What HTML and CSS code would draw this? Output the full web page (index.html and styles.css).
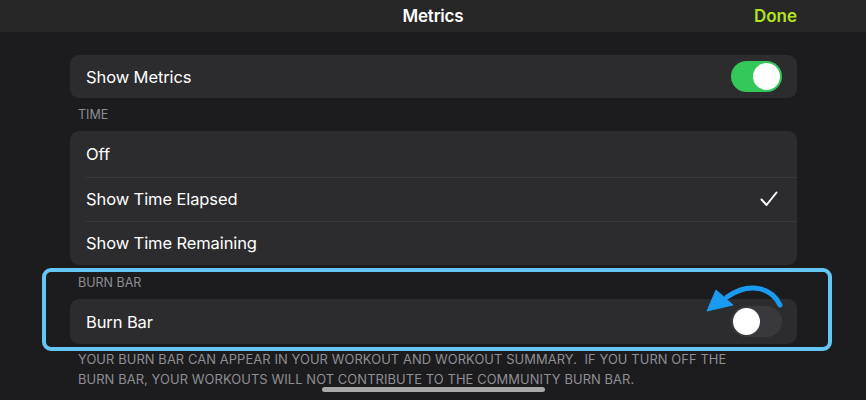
FILE: index.html
```html
<!DOCTYPE html>
<html>
<head>
<meta charset="utf-8">
<link rel="stylesheet" href="styles.css">
</head>
<body>
<header class="nav">
  <div class="nav-title">Metrics</div>
  <div class="nav-done">Done</div>
</header>
<main class="content">
  <div class="card first">
    <div class="row"><span>Show Metrics</span><span class="switch on"><span class="knob"></span></span></div>
  </div>
  <div class="section-label">TIME</div>
  <div class="card">
    <div class="row r1"><span>Off</span></div>
    <div class="row r2 sep"><span>Show Time Elapsed</span>
      <svg class="check" width="18" height="16" viewBox="0 0 18 16"><path d="M1.5 8.5 L6.5 14 L16.5 1.5" fill="none" stroke="#fff" stroke-width="2" stroke-linecap="round" stroke-linejoin="round"/></svg>
    </div>
    <div class="row r3 sep"><span>Show Time Remaining</span></div>
  </div>
  <div class="burn">
    <div class="section-label burn-label">BURN BAR</div>
    <div class="card">
      <div class="row"><span>Burn Bar</span><span class="switch off"><span class="knob"></span></span></div>
    </div>
    <div class="highlight"></div>
    <svg class="arrow" width="90" height="40" viewBox="0 0 90 40">
      <path d="M80 25 C72 8 50 1 27 17" fill="none" stroke="#1b9af1" stroke-width="5" stroke-linecap="round"/>
      <path d="M7 31 L16 10 L33 25 Z" fill="#1b9af1" stroke="#1b9af1" stroke-width="1" stroke-linejoin="round"/>
    </svg>
  </div>
  <p class="footer">YOUR BURN BAR CAN APPEAR IN YOUR WORKOUT AND WORKOUT SUMMARY.&nbsp; IF YOU TURN OFF THE<br>BURN BAR, YOUR WORKOUTS WILL NOT CONTRIBUTE TO THE COMMUNITY BURN BAR.</p>
</main>
<div class="home-indicator"></div>
</body>
</html>
```
FILE: styles.css
```css
* { box-sizing: border-box; }
html, body { margin: 0; padding: 0; }
body {
  width: 866px;
  height: 400px;
  overflow: hidden;
  background: #1c1c1e;
  font-family: Inter, "Noto Sans", sans-serif;
  color: #fff;
  position: relative;
}
.nav {
  height: 32px;
  background: #272727;
  display: flex;
  align-items: center;
  justify-content: center;
  position: relative;
}
.nav-title {
  font-size: 17px;
  font-weight: 600;
  letter-spacing: -0.2px;
}
.nav-done {
  position: absolute;
  right: 69px;
  top: 0;
  height: 32px;
  line-height: 32px;
  font-size: 17px;
  font-weight: 600;
  color: #b3e31d;
}
.content {
  padding: 0 69px 0 70px;
}
.card {
  background: #2c2c2e;
  border-radius: 9px;
}
.card.first { margin-top: 23px; }
.row {
  height: 43px;
  display: flex;
  align-items: center;
  justify-content: space-between;
  padding: 0 16px;
  font-size: 16.5px;
  letter-spacing: -0.1px;
  position: relative;
}
.row.r1 { height: 46px; }
.row.r2 { height: 44px; }
.row.r3 { height: 44px; }
.burn .row { height: 45px; }
.row.sep::before {
  content: "";
  position: absolute;
  left: 16px;
  right: 0;
  top: 0;
  height: 1px;
  background: #38383a;
}
.check { margin-right: 3px; }
.switch {
  width: 51px;
  height: 31px;
  border-radius: 16px;
  display: flex;
  align-items: center;
  padding: 2px;
}
.switch.on { background: #34c759; justify-content: flex-end; margin-right: -1px; }
.switch.off { background: #39393d; justify-content: flex-start; margin-right: -1px; }
.knob {
  width: 27px;
  height: 27px;
  border-radius: 50%;
  background: #fff;
}
.section-label {
  height: 33px;
  display: flex;
  align-items: flex-end;
  padding: 0 0 9px 8px;
  font-size: 12.5px;
  line-height: 14px;
  color: #8e8e93;
}
.burn { position: relative; }
.burn-label { height: 34px; }
.highlight {
  position: absolute;
  top: 3px;
  bottom: -7px;
  left: -28px;
  right: -35px;
  border: 4px solid #63c6f4;
  border-radius: 9px;
}
.arrow {
  position: absolute;
  right: 7px;
  top: 15px;
}
.footer {
  margin: 0;
  padding: 6px 0 0 8px;
  font-size: 12.9px;
  line-height: 20px;
  color: #8e8e93;
  letter-spacing: 0.1px;
}
.home-indicator {
  position: absolute;
  left: 322px;
  top: 387px;
  width: 223px;
  height: 5px;
  border-radius: 3px;
  background: #a8a8a8;
}
```
